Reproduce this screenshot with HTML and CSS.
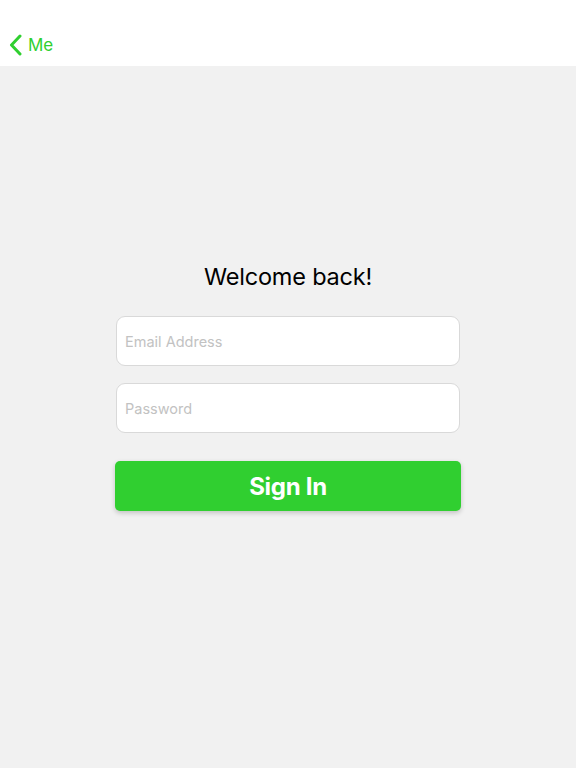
FILE: index.html
```html
<!DOCTYPE html>
<html lang="en">
  <head>
    <meta charset="UTF-8" />
    <meta name="viewport" content="width=device-width, initial-scale=1.0" />
    <title>Sign In</title>
    <link rel="stylesheet" href="styles.css">
  </head>
  <body>
    <header class="nav-bar">
      <a class="nav-bar__back" href="#">
        <svg class="nav-bar__chevron" viewBox="0 0 13 22" width="13" height="22">
          <path d="M 11 2 L 2.5 11 L 11 20" fill="none" stroke="currentColor" stroke-width="3" stroke-linecap="round" stroke-linejoin="round" />
        </svg>
        <span>Me</span>
      </a>
    </header>
    <main class="login">
      <h1 class="login__title">Welcome back!</h1>
      <form class="login__form">
        <input class="login__input" type="email" placeholder="Email Address" />
        <input class="login__input" type="password" placeholder="Password" />
        <button class="login__submit" type="button">Sign In</button>
      </form>
    </main>
  </body>
</html>
```

FILE: styles.css
```css
* {
  border: 0;
  box-sizing: border-box;
  margin: 0;
  padding: 0;
}
:root {
  --green: hsl(120, 62%, 50%);
  --bg: hsl(0, 0%, 94.5%);
  --line: hsl(0, 0%, 85%);
}
body,
input,
button {
  font-family: Inter, "Noto Sans", sans-serif;
}
body {
  background: var(--bg);
  color: #000;
  height: 100vh;
  display: flex;
  flex-direction: column;
}
.nav-bar {
  background: #fff;
  height: 66px;
  display: flex;
  align-items: flex-end;
  padding: 0 0 10px 9px;
}
.nav-bar__back {
  color: var(--green);
  display: flex;
  align-items: center;
  gap: 6px;
  font-size: 17px;
  text-decoration: none;
}
.nav-bar__chevron {
  display: block;
}
.login {
  display: flex;
  flex-direction: column;
  align-items: center;
  padding-top: 196px;
}
.login__title {
  font-size: 23.5px;
  font-weight: 400;
  line-height: 30px;
  letter-spacing: -0.2px;
  margin-bottom: 24px;
}
.login__form {
  width: 346px;
  display: flex;
  flex-direction: column;
  gap: 17px;
  padding: 0 1px;
}
.login__input {
  background: #fff;
  border: 1px solid var(--line);
  border-radius: 9px;
  height: 50px;
  padding: 0 8px;
  font-size: 14.5px;
  color: #000;
  outline: none;
}
.login__input::placeholder {
  color: hsl(0, 0%, 76%);
}
.login__submit {
  background: var(--green);
  border-radius: 5px;
  height: 50px;
  margin: 11px -1px 0;
  color: #fff;
  font-size: 24px;
  font-weight: 700;
  letter-spacing: -0.3px;
  box-shadow: 0 2px 5px hsla(0, 0%, 0%, 0.2);
  -webkit-appearance: none;
  appearance: none;
}
```
